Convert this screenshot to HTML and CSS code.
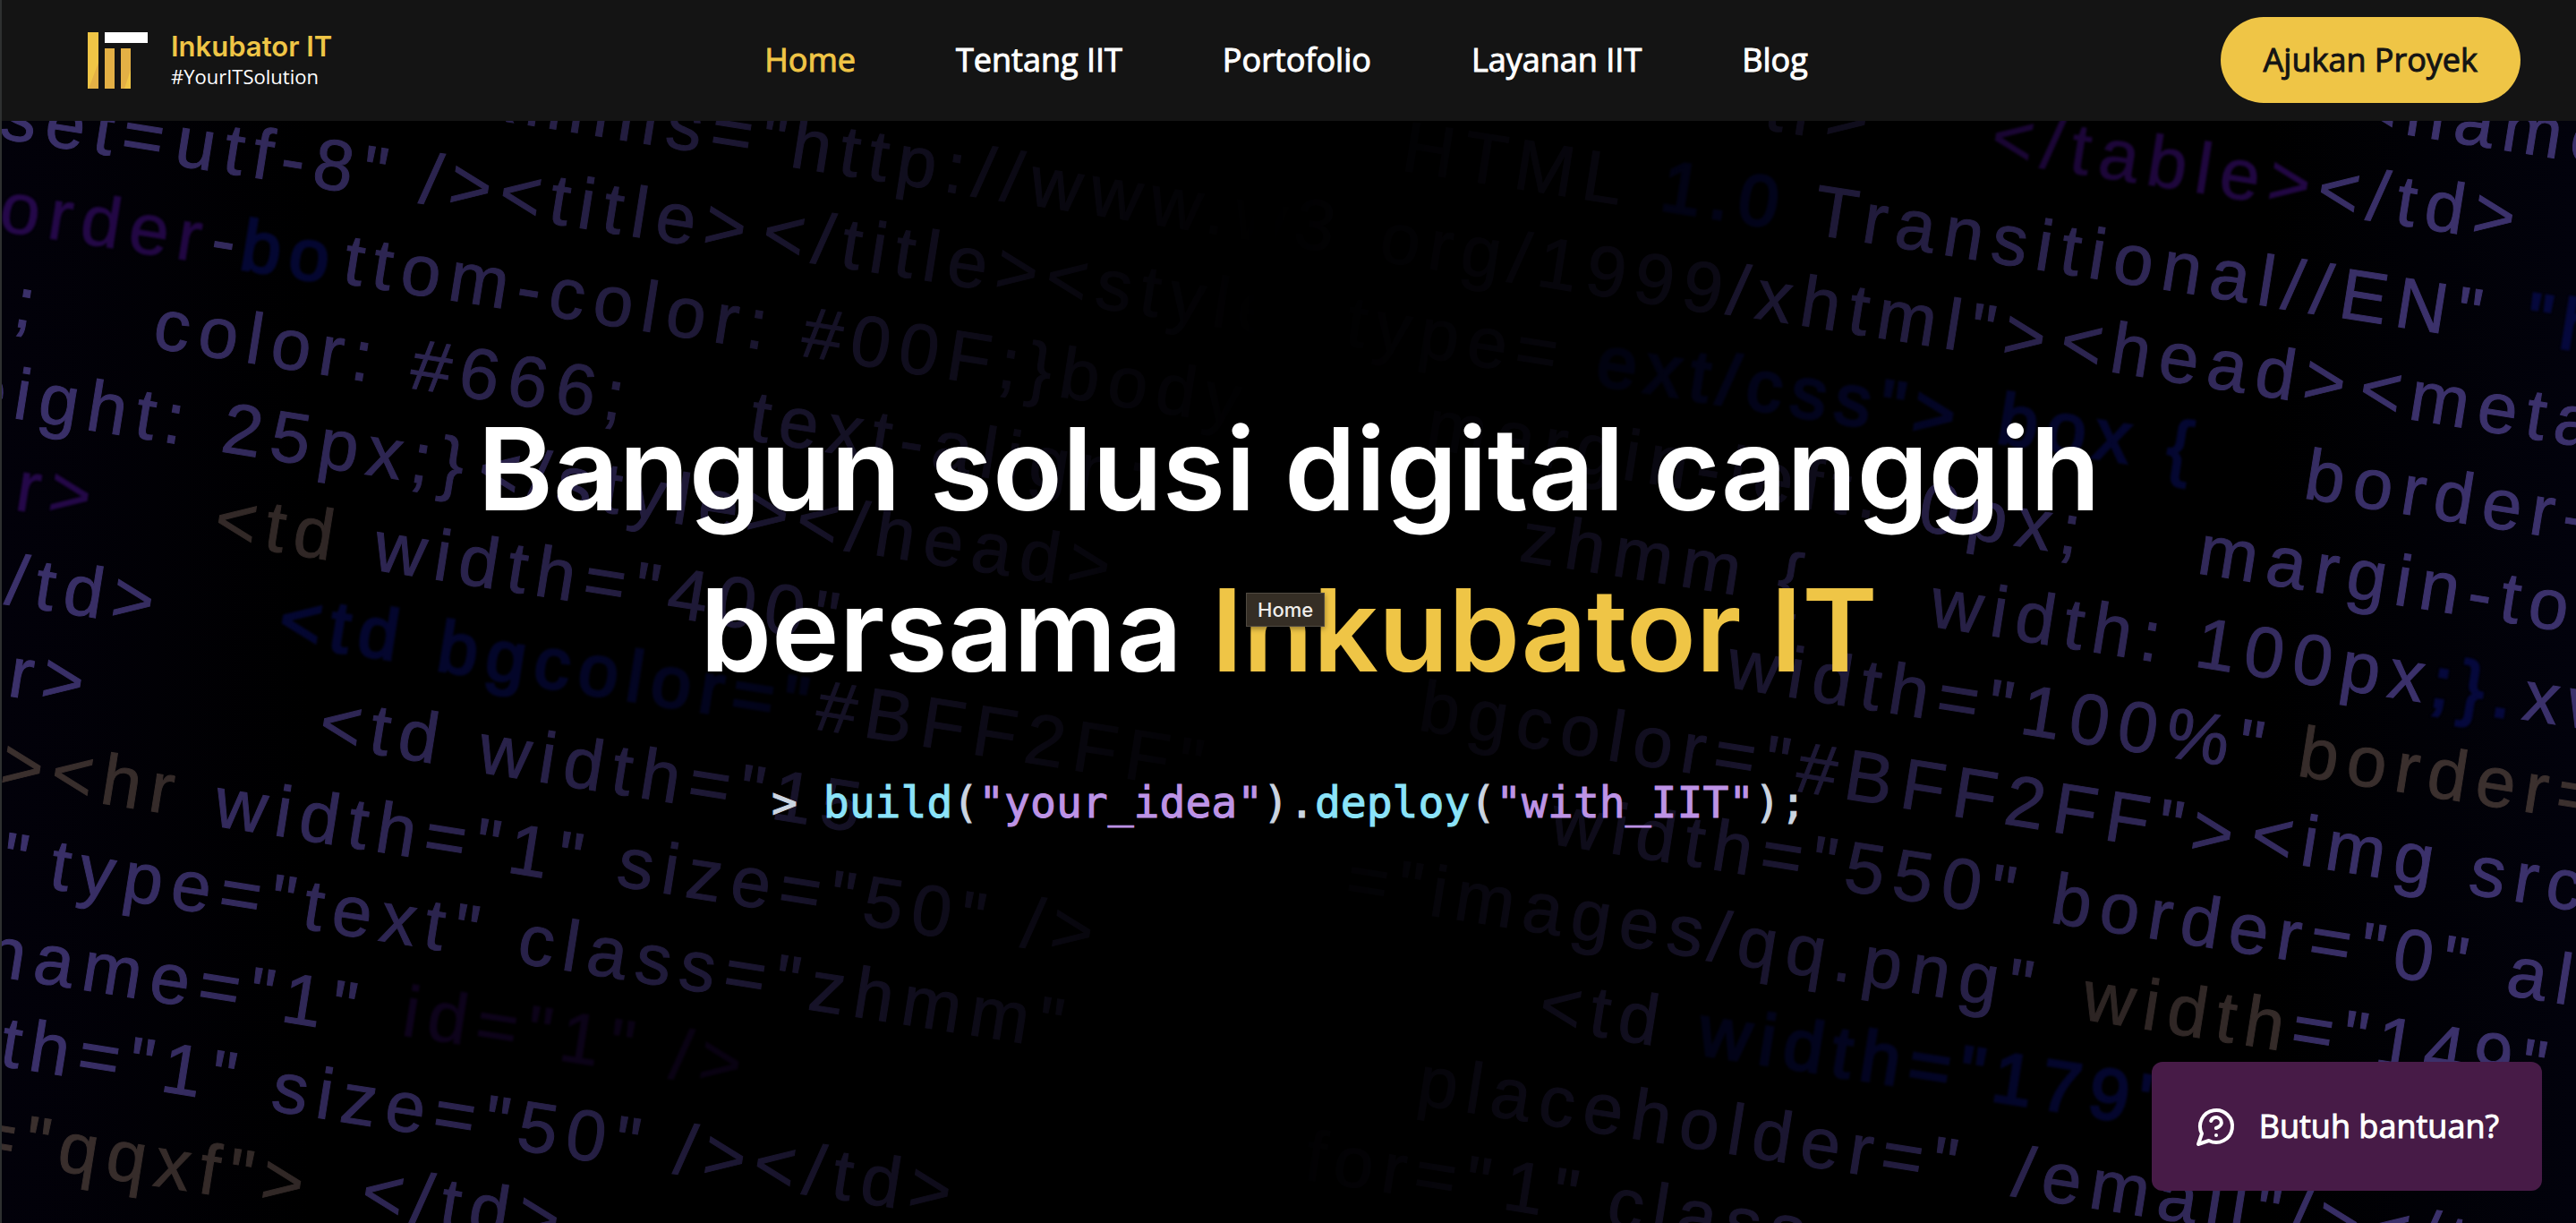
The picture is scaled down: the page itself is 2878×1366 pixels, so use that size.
FILE: index.html
```html
<!DOCTYPE html>
<html lang="id">
<head>
<meta charset="utf-8">
<meta name="viewport" content="width=device-width, initial-scale=1">
<title>Inkubator IT</title>
<link rel="stylesheet" href="styles.css">
</head>
<body>
<header class="site-header">
  <a class="brand" href="#">
    <svg class="brand-mark" viewBox="0 0 67 63" aria-hidden="true">
      <path fill="#efc546" d="M0 0h12v63H0z"/>
      <path fill="#e3b045" d="M12 34v29H1z"/>
      <path fill="#fff" d="M19 0h48v12H19z"/>
      <path fill="#e3b045" d="M19 18h11v45H19zM37 18h11v45H37z"/>
      <path fill="#efc546" d="M48 42v21h-7z"/>
    </svg>
    <span class="brand-text">
      <span class="brand-name">Inkubator IT</span>
      <span class="brand-tag">#YourITSolution</span>
    </span>
  </a>
  <nav class="site-nav" aria-label="Utama">
    <a class="nav-link active" href="#">Home</a>
    <a class="nav-link" href="#tentang">Tentang IIT</a>
    <a class="nav-link" href="#portofolio">Portofolio</a>
    <a class="nav-link" href="#layanan">Layanan IIT</a>
    <a class="nav-link" href="#blog">Blog</a>
  </nav>
  <button class="cta" type="button">Ajukan Proyek</button>
</header>

<main class="hero">
  <svg class="code-wall" viewBox="0 135 2878 1231" preserveAspectRatio="xMidYMid slice" aria-hidden="true">
    <!-- left screen -->
    <g>
      <text transform="translate(534 131) rotate(9)">xmlns="</text>
      <text transform="translate(880 186) rotate(9)">http://www.w3</text>
      <text transform="translate(-3 154) rotate(9)">set=</text>
      <text transform="translate(192 184) rotate(9)">utf-8"</text>
      <text transform="translate(466 226) rotate(9)">/&gt;&lt;title&gt;</text>
      <text transform="translate(848 284) rotate(9)">&lt;/title&gt;&lt;style</text>
      <text class="violet" transform="translate(-4 257) rotate(9)">order</text>
      <text transform="translate(232 293) rotate(9)">-</text>
      <text class="blue" transform="translate(265 300) rotate(9)">bo</text>
      <text transform="translate(380 316) rotate(9)">ttom-color:</text>
      <text transform="translate(892 397) rotate(9)">#00F;}body</text>
      <text transform="translate(12 364) rotate(9)">;</text>
      <text transform="translate(168 388) rotate(9)">color:</text>
      <text transform="translate(455 433) rotate(9)">#666;</text>
      <text transform="translate(834 491) rotate(9)">text-align:</text>
      <text transform="translate(-42 458) rotate(9)">eight:</text>
      <text transform="translate(244 504) rotate(9)">25px;}</text>
      <text transform="translate(530 549) rotate(9)">&lt;/style&gt;&lt;/head&gt;</text>
      <text class="violet" transform="translate(14 569) rotate(9)">r&gt;</text>
      <text class="gold" transform="translate(236 605) rotate(9)">&lt;td</text>
      <text transform="translate(414 636) rotate(9)">width="400"</text>
      <text transform="translate(3 674) rotate(9)">/td&gt;</text>
      <text class="blue" transform="translate(308 717) rotate(9)">&lt;td</text>
      <text class="blue" transform="translate(485 748) rotate(9)">bgcolor="</text>
      <text transform="translate(908 814) rotate(9)">#BFF2FF"</text>
      <text transform="translate(6 777) rotate(9)">r&gt;</text>
      <text transform="translate(353 832) rotate(9)">&lt;td</text>
      <text transform="translate(531 862) rotate(9)">width="15</text>
      <text class="gold" transform="translate(-3 879) rotate(9)">&gt;&lt;hr</text>
      <text transform="translate(236 922) rotate(9)">width="1"</text>
      <text transform="translate(686 989) rotate(9)">size="50"</text>
      <text transform="translate(1138 1057) rotate(9)">/&gt;</text>
      <text transform="translate(-2 984) rotate(9)">"</text>
      <text transform="translate(52 992) rotate(9)">type="text"</text>
      <text transform="translate(575 1075) rotate(9)">class="</text>
      <text transform="translate(900 1127) rotate(9)">zhmm"</text>
      <text transform="translate(-20 1088) rotate(9)">name="1"</text>
      <text class="violet faint" transform="translate(446 1156) rotate(9)">id="1"</text>
      <text class="violet faint" transform="translate(745 1204) rotate(9)">/&gt;</text>
      <text transform="translate(-3 1190) rotate(9)">th="1"</text>
      <text transform="translate(300 1240) rotate(9)">size="50"</text>
      <text transform="translate(750 1310) rotate(9)">/&gt;&lt;/td&gt;</text>
      <text class="gold" transform="translate(-33 1292) rotate(9)">="qqxf"&gt;</text>
      <text transform="translate(400 1356) rotate(9)">&lt;/td&gt;</text>
    </g>
    <!-- right screen -->
    <g>
      <text class="faint" transform="translate(1968 144) rotate(9)">tr&gt;</text>
      <text transform="translate(2628 141) rotate(9)">&lt;name=</text>
      <text class="violet" transform="translate(2221 178) rotate(9)">&lt;/table&gt;</text>
      <text transform="translate(2585 236) rotate(9)">&lt;/td&gt;</text>
      <text class="faint" transform="translate(1563 190) rotate(9)">HTML</text>
      <text class="blue" transform="translate(1852 234) rotate(9)">1.0</text>
      <text transform="translate(2022 261) rotate(9)">Transitional//EN"</text>
      <text class="blue" transform="translate(2818 382) rotate(9)">"h</text>
      <text class="faint" transform="translate(1538 291) rotate(9)">org/1999</text>
      <text transform="translate(1926 350) rotate(9)">/xhtml"&gt;</text>
      <text transform="translate(2298 406) rotate(9)">&lt;head&gt;</text>
      <text transform="translate(2632 459) rotate(9)">&lt;meta</text>
      <text class="faint" transform="translate(1500 385) rotate(9)">type=</text>
      <text class="blue" transform="translate(1780 429) rotate(9)">ext/css"&gt;</text>
      <text class="blue" transform="translate(2228 494) rotate(9)">box {</text>
      <text class="faint" transform="translate(1590 500) rotate(9)">margin-left:</text>
      <text transform="translate(2571 556) rotate(9)">border-</text>
      <text transform="translate(2140 592) rotate(9)">0px;</text>
      <text transform="translate(2452 640) rotate(9)">margin-to</text>
      <text transform="translate(1695 626) rotate(9)">zhmm {</text>
      <text transform="translate(2153 699) rotate(9)">width:</text>
      <text transform="translate(2449 744) rotate(9)">100px</text>
      <text class="blue" transform="translate(2712 788) rotate(9)">;}.</text>
      <text transform="translate(2815 803) rotate(9)">xw</text>
      <text transform="translate(1926 767) rotate(9)">width="100%"</text>
      <text class="gold" transform="translate(2564 866) rotate(9)">border=</text>
      <text transform="translate(1582 815) rotate(9)">bgcolor="</text>
      <text transform="translate(2003 883) rotate(9)">#BFF2FF"&gt;</text>
      <text transform="translate(2511 957) rotate(9)">&lt;img</text>
      <text transform="translate(2755 998) rotate(9)">src</text>
      <text transform="translate(1729 942) rotate(9)">width="550"</text>
      <text transform="translate(2288 1030) rotate(9)">border="0"</text>
      <text transform="translate(2797 1111) rotate(9)">al</text>
      <text transform="translate(1500 1007) rotate(9)">="images</text>
      <text transform="translate(1905 1072) rotate(9)">/qq.png"</text>
      <text class="gold" transform="translate(2323 1138) rotate(9)">width</text>
      <text transform="translate(2556 1174) rotate(9)">="149"</text>
      <text transform="translate(1716 1147) rotate(9)">&lt;td</text>
      <text class="blue" transform="translate(1894 1177) rotate(9)">width="179"</text>
      <text transform="translate(1580 1233) rotate(9)">placeholder="</text>
      <text transform="translate(2245 1335) rotate(9)">/email"/&gt;&lt;/t</text>
      <text transform="translate(1454 1317) rotate(9)">for="</text>
      <text transform="translate(1676 1350) rotate(9)">1"</text>
      <text transform="translate(1792 1369) rotate(9)">class=</text>
    </g>
  </svg>

  <div class="hero-content">
    <h1 class="headline">Bangun solusi digital canggih<br>bersama <span class="accent">Inkubator IT</span></h1>
    <p class="snippet">&gt; <span class="fn">build</span>(<span class="str">"your_idea"</span>).<span class="fn">deploy</span>(<span class="str">"with_IIT"</span>);</p>
    <div class="tooltip" role="tooltip">Home</div>
  </div>
</main>

<button class="help" type="button">
  <svg class="help-icon" viewBox="0 0 24 24" fill="none" stroke="currentColor" stroke-width="2" stroke-linecap="round" stroke-linejoin="round" aria-hidden="true">
    <path d="M7.9 20A9 9 0 1 0 4 16.1L2 22Z"/>
    <path d="M9.09 9a3 3 0 0 1 5.83 1c0 2-3 3-3 3"/>
    <path d="M12 17h.01"/>
  </svg>
  Butuh bantuan?
</button>
</body>
</html>
```
FILE: styles.css
```css
* {
  box-sizing: border-box;
}

body {
  margin: 0;
  min-height: 100vh;
  display: flex;
  flex-direction: column;
  border-left: 2px solid #2e3030;
  background: #000;
  color: #fff;
  font-family: "Open Sans", "Noto Sans", sans-serif;
}

button {
  border: 0;
  font: inherit;
  cursor: pointer;
}

/* Header */
.site-header {
  display: grid;
  grid-template-columns: 1fr auto 1fr;
  align-items: center;
  padding: 19px 62px 20px 56px;
  background: #141414;
  font-size: 36px;
  font-weight: 500;
  line-height: 48px;
}

.brand {
  display: flex;
  align-items: center;
  gap: 26px;
  padding-left: 40px;
  color: #fff;
  text-decoration: none;
}

.brand-mark {
  width: 67px;
  height: 63px;
}

.brand-text {
  display: flex;
  flex-direction: column;
}

.brand-name {
  color: #efc546;
  font-family: Inter, sans-serif;
  font-size: 31px;
  font-weight: 600;
  line-height: 36px;
}

.brand-tag {
  font-size: 22px;
  font-weight: 400;
  line-height: 30px;
}

.site-nav {
  display: flex;
  gap: 112px;
}

.nav-link {
  color: #fff;
  text-decoration: none;
}

.nav-link.active {
  color: #efc546;
}

.nav-link,
.cta,
.help,
.snippet {
  -webkit-text-stroke: 1px currentColor;
}

.cta {
  justify-self: end;
  padding: 24px 48px;
  border-radius: 48px;
  background: #efc546;
  color: #141414;
}

/* Hero */
.hero {
  position: relative;
  flex: 1;
  display: flex;
  align-items: center;
  justify-content: center;
  padding-bottom: 136px;
  overflow: hidden;
  background: linear-gradient(90deg, #02010a, #000 12%, #000 88%, #02020c);
}

.code-wall {
  position: absolute;
  inset: 0;
  width: 100%;
  height: 100%;
  fill: #3b316b;
  stroke: #3b316b;
  stroke-width: 1px;
  font-family: "Liberation Sans", sans-serif;
  font-size: 80px;
  letter-spacing: 10px;
  user-select: none;
  mask-image: linear-gradient(90deg, #000, rgb(0 0 0 / 65%) 22%, rgb(0 0 0 / 30%) 34%, rgb(0 0 0 / 10%) 43%, transparent 49%, rgb(0 0 0 / 8%) 55%, rgb(0 0 0 / 28%) 63%, rgb(0 0 0 / 65%) 76%, #000 94%);
}

.code-wall .violet {
  fill: #25084a;
  stroke: #25084a;
  filter: blur(1px);
}

.code-wall .blue {
  fill: #05083c;
  stroke: #05083c;
  stroke-width: 3px;
  filter: blur(1px);
}

.code-wall .gold {
  fill: #3b302e;
  stroke: #3b302e;
}

.code-wall .faint {
  opacity: 0.5;
}

.hero-content {
  position: relative;
  display: flex;
  flex-direction: column;
  align-items: center;
  gap: 66px;
}

.headline {
  margin: 0;
  font-family: Inter, sans-serif;
  font-size: 128px;
  font-weight: 600;
  line-height: 180px;
  text-align: center;
}

.accent {
  color: #efc546;
}

.snippet {
  margin: 0;
  color: #cbd5e1;
  font-family: "DejaVu Sans Mono", monospace;
  font-size: 48px;
  line-height: 72px;
  white-space: pre;
}

.fn {
  color: #8be3f8;
  -webkit-text-stroke-color: #8be3f8;
}

.str {
  color: #bd93e6;
  -webkit-text-stroke-color: #bd93e6;
}

.tooltip {
  position: absolute;
  top: 228px;
  left: calc(50% - 48px);
  padding: 3px 12px;
  border: 1px solid #504a42;
  background: #352e25;
  box-shadow: 0 2px 6px rgb(0 0 0 / 40%);
  color: #f0eeec;
  font-family: Inter, sans-serif;
  font-size: 22px;
  font-weight: 500;
  line-height: 30px;
}

/* Floating help button */
.help {
  position: fixed;
  right: 38px;
  bottom: 36px;
  display: flex;
  align-items: center;
  gap: 24px;
  padding: 48px;
  border-radius: 12px;
  background: #471b47;
  color: #fff;
  font-size: 36px;
  font-weight: 500;
  line-height: 48px;
}

.help-icon {
  width: 48px;
  height: 48px;
}
```
